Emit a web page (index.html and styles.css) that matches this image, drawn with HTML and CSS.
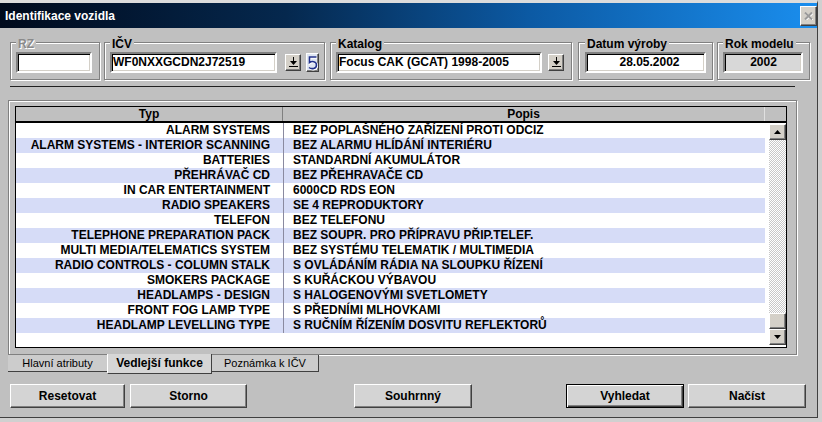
FILE: index.html
```html
<!DOCTYPE html>
<html lang="cs">
<head>
  <meta charset="UTF-8" />
  <title>Identifikace vozidla</title>
  <link rel="stylesheet" href="styles.css">
</head>
<body>
<div class="window">
  <div class="titlebar">
    <span class="title">Identifikace vozidla</span>
    <div class="close">
      <svg width="9" height="8" viewBox="0 0 9 8"><path d="M1 0.5 L8 7.5 M8 0.5 L1 7.5" stroke="#fff" stroke-width="2" transform="translate(0.7 0.7)"/><path d="M1 0.5 L8 7.5 M8 0.5 L1 7.5" stroke="#9a9a9a" stroke-width="2"/></svg>
    </div>
  </div>

  <div class="content">
    <div class="groups">
      <div class="group g-rz">
        <span class="group-label disabled">RZ</span>
        <div class="group-row"><div class="field f-rz"></div></div>
      </div>
      <div class="group g-icv">
        <span class="group-label">IČV</span>
        <div class="group-row">
          <div class="field f-icv">WF0NXXGCDN2J72519</div>
          <div class="drop"><svg width="9" height="11" viewBox="0 0 9 11"><path d="M4 0h1v4h3l-3.5 4l-3.5-4h3z" fill="#000"/><rect x="0" y="9" width="9" height="1" fill="#000"/></svg></div>
          <div class="undo"><svg width="11" height="16" viewBox="0 0 11 16"><path d="M9.5 2 H2.5 V7.5 C4.5 6 9.5 6 9.5 10 C9.5 14 4.5 14.5 2 12.5" fill="none" stroke="#fff" stroke-width="2.2" transform="translate(0.6 0.6)"/><path d="M9.5 2 H2.5 V7.5 C4.5 6 9.5 6 9.5 10 C9.5 14 4.5 14.5 2 12.5" fill="none" stroke="#22328c" stroke-width="1.6"/></svg></div>
        </div>
      </div>
      <div class="group g-kat">
        <span class="group-label">Katalog</span>
        <div class="group-row">
          <div class="field f-kat">Focus CAK (GCAT) 1998-2005</div>
          <div class="drop"><svg width="9" height="11" viewBox="0 0 9 11"><path d="M4 0h1v4h3l-3.5 4l-3.5-4h3z" fill="#000"/><rect x="0" y="9" width="9" height="1" fill="#000"/></svg></div>
        </div>
      </div>
      <div class="group g-dat">
        <span class="group-label">Datum výroby</span>
        <div class="group-row"><div class="field f-dat">28.05.2002</div></div>
      </div>
      <div class="group g-rok">
        <span class="group-label">Rok modelu</span>
        <div class="group-row"><div class="field f-rok">2002</div></div>
      </div>
    </div>

    <div class="separator"></div>

    <div class="panel">
      <div class="grid">
        <div class="grid-head">
          <div class="h-typ">Typ</div>
          <div class="h-popis">Popis</div>
          <div class="h-corner"></div>
        </div>
        <div class="grid-body">
          <div class="rows">
            <div class="row"><div class="c1">ALARM SYSTEMS</div><div class="c2">BEZ POPLAŠNÉHO ZAŘÍZENÍ PROTI ODCIZ</div></div>
            <div class="row"><div class="c1">ALARM SYSTEMS - INTERIOR SCANNING</div><div class="c2">BEZ ALARMU HLÍDÁNÍ INTERIÉRU</div></div>
            <div class="row"><div class="c1">BATTERIES</div><div class="c2">STANDARDNÍ AKUMULÁTOR</div></div>
            <div class="row"><div class="c1">PŘEHRÁVAČ CD</div><div class="c2">BEZ PŘEHRAVAČE CD</div></div>
            <div class="row"><div class="c1">IN CAR ENTERTAINMENT</div><div class="c2">6000CD RDS EON</div></div>
            <div class="row"><div class="c1">RADIO SPEAKERS</div><div class="c2">SE 4 REPRODUKTORY</div></div>
            <div class="row"><div class="c1">TELEFON</div><div class="c2">BEZ TELEFONU</div></div>
            <div class="row"><div class="c1">TELEPHONE PREPARATION PACK</div><div class="c2">BEZ SOUPR. PRO PŘÍPRAVU PŘIP.TELEF.</div></div>
            <div class="row"><div class="c1">MULTI MEDIA/TELEMATICS SYSTEM</div><div class="c2">BEZ SYSTÉMU TELEMATIK / MULTIMEDIA</div></div>
            <div class="row"><div class="c1">RADIO CONTROLS - COLUMN STALK</div><div class="c2">S OVLÁDÁNÍM RÁDIA NA SLOUPKU ŘÍZENÍ</div></div>
            <div class="row"><div class="c1">SMOKERS PACKAGE</div><div class="c2">S KUŘÁCKOU VÝBAVOU</div></div>
            <div class="row"><div class="c1">HEADLAMPS - DESIGN</div><div class="c2">S HALOGENOVÝMI SVETLOMETY</div></div>
            <div class="row"><div class="c1">FRONT FOG LAMP TYPE</div><div class="c2">S PŘEDNÍMI MLHOVKAMI</div></div>
            <div class="row"><div class="c1">HEADLAMP LEVELLING TYPE</div><div class="c2">S RUČNÍM ŘÍZENÍM DOSVITU REFLEKTORŮ</div></div>
          </div>
          <div class="scrollbar">
            <div class="sb-btn"><svg width="7" height="4" viewBox="0 0 7 4"><path d="M3.5 0 L7 4 H0z" fill="#000"/></svg></div>
            <div class="sb-track"></div>
            <div class="sb-thumb"></div>
            <div class="sb-btn"><svg width="7" height="4" viewBox="0 0 7 4"><path d="M0 0 H7 L3.5 4z" fill="#000"/></svg></div>
          </div>
        </div>
      </div>
    </div>

    <div class="tabs">
      <div class="tab t1">Hlavní atributy</div>
      <div class="tab t2 active">Vedlejší funkce</div>
      <div class="tab t3">Poznámka k IČV</div>
    </div>

    <div class="buttons">
      <button class="btn b-reset">Resetovat</button>
      <button class="btn b-storno">Storno</button>
      <button class="btn b-souhrn">Souhrnný</button>
      <button class="btn b-vyhledat default">Vyhledat</button>
      <button class="btn b-nacist">Načíst</button>
    </div>
  </div>
</div>
</body>
</html>
```

FILE: styles.css
```css
body {
  margin: 0;
  background: #d0d0d0;
  font-family: "Liberation Sans", Arial, sans-serif;
  font-size: 12px;
  color: #000;
}

.window {
  width: 818px;
  height: 418px;
  box-sizing: border-box;
  background: #c0c0c0;
  border-top: 3px solid #dcdcdc;
  border-right: 1px solid #404040;
  border-bottom: 1px solid #404040;
  display: flex;
  flex-direction: column;
}

.titlebar {
  height: 25px;
  flex: none;
  display: flex;
  align-items: center;
  justify-content: space-between;
  padding-left: 5px;
  background: linear-gradient(90deg, #000a1c 0%, #05284e 35%, #0c5aa4 65%, #1a8eee 100%);
}

.title {
  color: #fff;
  font-weight: bold;
}

.close {
  width: 17px;
  height: 20px;
  box-sizing: border-box;
  margin-right: 0;
  background: #d4d0c8;
  border: 1px solid;
  border-color: #fff #404040 #404040 #fff;
  box-shadow: inset -1px -1px 0 #808080;
  display: flex;
  align-items: center;
  justify-content: center;
}

.content {
  padding-top: 14px;
}

/* top group boxes */
.groups {
  display: flex;
}

.group {
  height: 38px;
  box-sizing: border-box;
  border: 1px solid #808080;
  box-shadow: inset 1px 1px 0 #fff, 1px 1px 0 #fff;
  padding: 0 5px;
  display: flex;
  flex-direction: column;
  align-items: flex-start;
}

.g-rz { width: 90px; margin-left: 10px; }
.g-icv { width: 221px; margin-left: 4px; }
.g-kat { width: 242px; margin-left: 5px; }
.g-dat { width: 135px; margin-left: 6px; padding-left: 6px; }
.g-rok { width: 93px; margin-left: 4px; }

.group-label {
  margin-top: -6px;
  padding: 0 2px;
  line-height: 14px;
  font-weight: bold;
  background: #c0c0c0;
}

.group-label.disabled {
  color: #8a8a8a;
  text-shadow: 1px 1px 0 #fff;
}

.group-row {
  display: flex;
  align-items: center;
  margin-top: 1px;
}

.field {
  height: 21px;
  box-sizing: border-box;
  border: 2px solid;
  border-color: #808080 #fff #fff #808080;
  box-shadow: inset 1px 1px 0 #000, inset -1px -1px 0 #d4d0c8;
  background: #fff;
  font-weight: bold;
  line-height: 17px;
  padding-left: 1px;
  white-space: nowrap;
  overflow: hidden;
}

.f-rz { width: 76px; }
.f-icv { width: 167px; }
.f-kat { width: 206px; }
.f-dat { width: 121px; text-align: center; padding-left: 8px; }
.f-rok { width: 80px; text-align: center; background: #d8d8d8; }

.drop, .undo {
  box-sizing: border-box;
  background: #d4d0c8;
  border: 1px solid;
  border-color: #fff #404040 #404040 #fff;
  box-shadow: inset -1px -1px 0 #808080;
  display: flex;
  align-items: center;
  justify-content: center;
}

.drop {
  width: 16px;
  height: 17px;
  margin-left: 8px;
}

.g-kat .drop { margin-left: 6px; }

.undo {
  width: 13px;
  height: 19px;
  margin-left: 5px;
  background: #dfe6f2;
}

.separator {
  height: 1px;
  width: 785px;
  margin: 6px 0 0 10px;
  background: #202020;
}

/* grid panel */
.panel {
  width: 789px;
  height: 255px;
  box-sizing: border-box;
  margin: 13px 0 0 8px;
  padding: 5px 0 0 6px;
  border: 1px solid #808080;
  box-shadow: inset 1px 1px 0 #fff, 1px 1px 0 #fff;
}

.grid {
  width: 772px;
  height: 242px;
  box-sizing: border-box;
  border: 1px solid #000;
  background: #fff;
  display: flex;
  flex-direction: column;
}

.grid-head {
  height: 16px;
  box-sizing: border-box;
  border-bottom: 2px solid #000;
  display: flex;
  background: #c0c0c0;
  font-weight: bold;
  line-height: 14px;
  text-align: center;
}

.h-typ {
  width: 267px;
  box-sizing: border-box;
  border-right: 1px solid #808080;
}

.h-popis {
  width: 482px;
  box-sizing: border-box;
  border-right: 1px solid #e0e0e0;
}

.h-corner { flex: 1; }

.grid-body {
  flex: 1;
  display: flex;
}

.rows {
  width: 749px;
}

.row {
  display: flex;
  height: 15px;
  line-height: 15px;
  font-weight: bold;
  white-space: nowrap;
}

.row:nth-child(even) {
  background: #d6dcf7;
}

.c1 {
  width: 267px;
  box-sizing: border-box;
  text-align: right;
  padding-right: 13px;
}

.c2 {
  flex: 1;
  border-left: 1px solid #8a8aa0;
  padding-left: 9px;
}

.scrollbar {
  width: 17px;
  height: 221px;
  margin: 1px 0 0 auto;
  display: flex;
  flex-direction: column;
}

.sb-btn, .sb-thumb {
  height: 16px;
  box-sizing: border-box;
  background: #d4d0c8;
  border: 1px solid;
  border-color: #fff #404040 #404040 #fff;
  box-shadow: inset -1px -1px 0 #808080;
  display: flex;
  align-items: center;
  justify-content: center;
}

.sb-track {
  flex: 1;
  background: repeating-conic-gradient(#fff 0 25%, #c8c8c8 0 50%) 0 0 / 2px 2px;
}

/* tabs */
.tabs {
  display: flex;
  align-items: flex-start;
  height: 19px;
  margin-left: 8px;
}

.tab {
  height: 17px;
  box-sizing: border-box;
  line-height: 16px;
  text-align: center;
  font-size: 11px;
  background: #cccccc;
  border-bottom: 1px solid #404040;
}

.t1 { width: 99px; }
.t3 { width: 107px; border-right: 1px solid #404040; }

.tab.active {
  width: 105px;
  height: 20px;
  margin-top: -1px;
  line-height: 18px;
  font-size: 12px;
  font-weight: bold;
  background: #d6d6d6;
  border-left: 1px solid #fff;
  border-right: 1px solid #404040;
}

/* bottom buttons */
.buttons {
  display: flex;
  margin-top: 10px;
}

.btn {
  height: 24px;
  box-sizing: border-box;
  padding: 0;
  font: bold 12px "Liberation Sans", Arial, sans-serif;
  color: #000;
  background: #d4d4d4;
  border: 1px solid;
  border-color: #fff #404040 #404040 #fff;
  box-shadow: inset -1px -1px 0 #808080;
}

.btn.default {
  border: 1px solid #000;
  box-shadow: inset 1px 1px 0 #fff, inset -1px -1px 0 #404040, inset -2px -2px 0 #808080;
}

.b-reset { width: 115px; margin-left: 10px; }
.b-storno { width: 117px; margin-left: 5px; }
.b-souhrn { width: 118px; margin-left: 107px; }
.b-vyhledat { width: 118px; margin-left: 94px; }
.b-nacist { width: 118px; margin-left: 4px; }
```
